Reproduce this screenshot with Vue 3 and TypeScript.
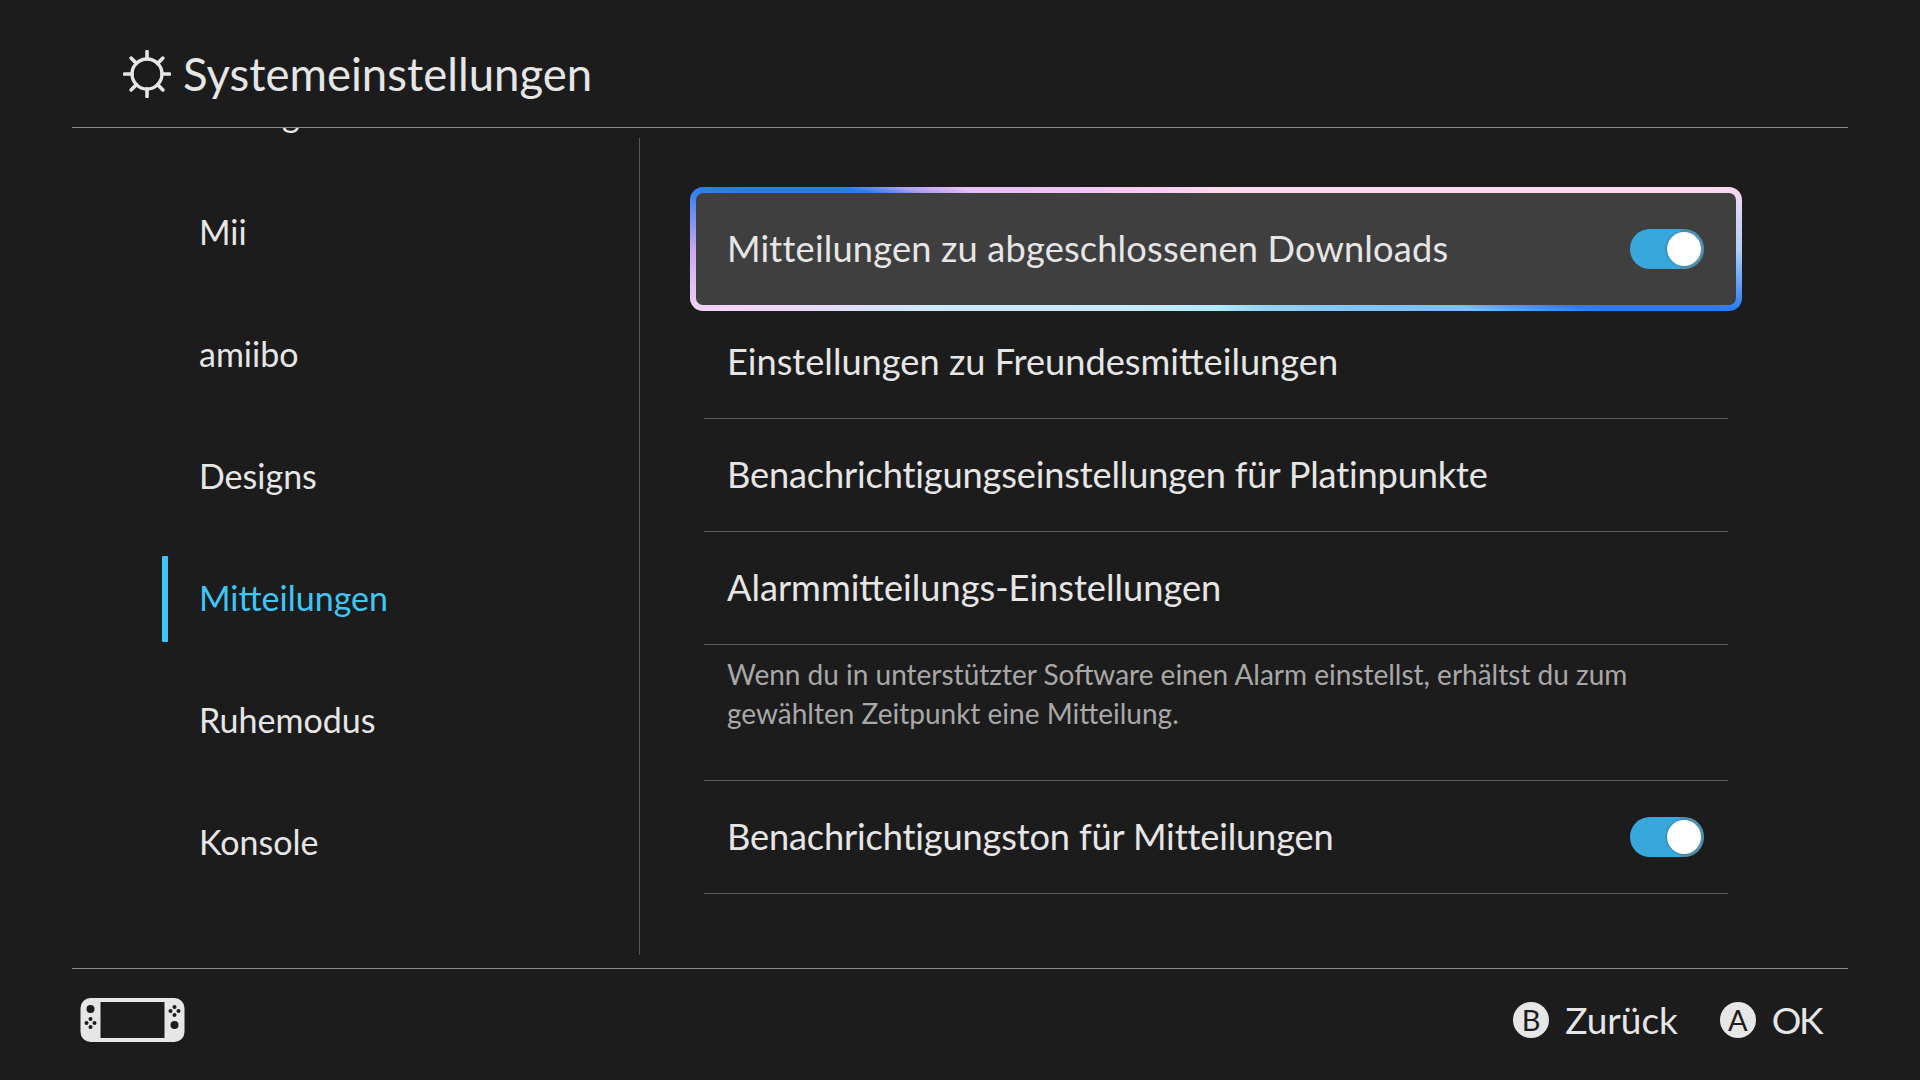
<script setup lang="ts">
interface SideItem { label: string; active?: boolean }
const sideItems: SideItem[] = [
  { label: 'Anzeige' },
  { label: 'Mii' },
  { label: 'amiibo' },
  { label: 'Designs' },
  { label: 'Mitteilungen', active: true },
  { label: 'Ruhemodus' },
  { label: 'Konsole' },
]
const spokes = [0, 45, 90, 135, 180, 225, 270, 315]
</script>

<template>
  <div class="page">
    <header class="header">
      <svg class="gear" viewBox="0 0 48 48" aria-hidden="true">
        <circle cx="24" cy="24" r="15" fill="none" stroke="#e6e6e6" stroke-width="3.4" />
        <line
          v-for="a in spokes"
          :key="a"
          x1="24" y1="9" x2="24" y2="1.5"
          stroke="#e6e6e6" stroke-width="3.6" stroke-linecap="round"
          :transform="`rotate(${a} 24 24)`"
        />
      </svg>
      <h1 class="title">Systemeinstellungen</h1>
    </header>

    <main class="main">
      <nav class="side">
        <div v-for="item in sideItems" :key="item.label" class="side-item" :class="{ active: item.active }">
          <span class="side-mark"></span>
          <span class="side-label">{{ item.label }}</span>
        </div>
      </nav>
      <div class="divider"></div>
      <section class="content">
        <div class="card">
          <span class="label wide">Mitteilungen zu abgeschlossenen Downloads</span>
          <span class="toggle"><span class="knob"></span></span>
        </div>
        <div class="row"><span class="label">Einstellungen zu Freundesmitteilungen</span></div>
        <div class="row"><span class="label tight">Benachrichtigungseinstellungen für Platinpunkte</span></div>
        <div class="row"><span class="label">Alarmmitteilungs-Einstellungen</span></div>
        <p class="desc">Wenn du in unterstützter Software einen Alarm einstellst, erhältst du zum<br />gewählten Zeitpunkt eine Mitteilung.</p>
        <div class="row">
          <span class="label tight">Benachrichtigungston für Mitteilungen</span>
          <span class="toggle"><span class="knob"></span></span>
        </div>
      </section>
    </main>

    <footer class="footer">
      <svg class="console" viewBox="0 0 104 44" aria-hidden="true">
        <path
          fill="#e6e6e6"
          fill-rule="evenodd"
          d="M10 0H94A10 10 0 0 1 104 10V34A10 10 0 0 1 94 44H10A10 10 0 0 1 0 34V10A10 10 0 0 1 10 0ZM20 4V40H84V4Z"
        />
        <g fill="#1c1c1c">
          <circle cx="10" cy="11" r="4" />
          <circle cx="10" cy="21" r="2" /><circle cx="10" cy="29" r="2" />
          <circle cx="6" cy="25" r="2" /><circle cx="14" cy="25" r="2" />
          <circle cx="94" cy="9" r="2" /><circle cx="94" cy="17" r="2" />
          <circle cx="90" cy="13" r="2" /><circle cx="98" cy="13" r="2" />
          <circle cx="94" cy="27" r="4" />
        </g>
      </svg>
      <div class="actions">
        <div class="action"><span class="btn">B</span><span>Zurück</span></div>
        <div class="action"><span class="btn">A</span><span class="ok">OK</span></div>
      </div>
    </footer>
  </div>
</template>

<style>
html, body { margin: 0; background: #1c1c1c; }
</style>

<style scoped>
.page {
  width: 1920px;
  height: 1080px;
  background: #1c1c1c;
  color: #e6e6e6;
  font-family: "Lato", "Noto Sans", sans-serif;
  display: flex;
  flex-direction: column;
  overflow: hidden;
}
.header {
  height: 105px;
  margin: 0 72px;
  padding: 22px 0 0 51px;
  border-bottom: 1px solid #8a8a8a;
  display: flex;
  align-items: center;
  gap: 12px;
  flex: none;
}
.gear { width: 48px; height: 48px; flex: none; margin-top: -1px; }
.title { margin: -1px 0 0; font-size: 45.5px; font-weight: 400; line-height: 1; }
.main { flex: 1; display: flex; min-height: 0; margin: 0 72px; }
.side { width: 567px; flex: none; overflow: hidden; box-sizing: border-box; padding-left: 90px; }
.side-item {
  height: 122px;
  display: flex;
  align-items: center;
  font-size: 34px;
  gap: 31px;
}
.side-item:first-child { margin-top: -78px; }
.side-label { margin-top: -2px; line-height: 1; }
.side-item:first-child .side-label { margin-top: 5px; }
.side-mark { width: 6px; height: 86px; flex: none; border-radius: 1px; }
.active { color: #3fc6f5; }
.active .side-mark { background: #3fc6f5; }
.divider { width: 1px; background: #555; margin: 10px 0 13px; flex: none; }
.content { flex: 1; padding: 59px 0 0 50px; }
.card {
  width: 1052px;
  height: 124px;
  box-sizing: border-box;
  padding: 0 32px 0 31px;
  border: 6px solid transparent;
  border-radius: 13px;
  background:
    linear-gradient(#3f3f3f, #3f3f3f) padding-box,
    conic-gradient(from 0deg,
      #ffd8ee 0deg, #ffd8f0 83deg, #b0d0fa 90deg, #2a7df0 96.7deg, #2a7df0 99deg,
      #7dc0fa 103.3deg, #b0ecfc 180deg, #cfe8fa 258.9deg, #f4d4f6 263deg,
      #c8a8f2 270deg, #2a7df0 276.7deg, #2a7df0 279.3deg, #b0a0f0 281deg,
      #e8bef6 283.3deg, #f8c8f4 301deg, #ffd8ee 360deg) border-box;
  display: flex;
  align-items: center;
  justify-content: space-between;
  font-size: 36.2px;
  margin-bottom: -5px;
}
.row {
  margin: 0 14px;
  width: 1024px;
  height: 113px;
  box-sizing: border-box;
  border-bottom: 1px solid #5c5c5c;
  padding: 0 24px 0 23px;
  display: flex;
  align-items: center;
  justify-content: space-between;
  font-size: 36.2px;
}
.label { margin-top: -3px; }
.wide { letter-spacing: 0.18px; }
.tight { letter-spacing: -0.15px; }
.desc {
  margin: 0 14px;
  width: 1024px;
  height: 136px;
  box-sizing: border-box;
  border-bottom: 1px solid #5c5c5c;
  padding: 10px 23px 0;
  font-size: 28px;
  line-height: 39px;
  color: #a8a8a8;
}
.toggle {
  width: 74px;
  height: 40px;
  border-radius: 20px;
  background: linear-gradient(to right, #38a8dc 68%, #4f92ad 68%);
  display: flex;
  align-items: center;
  justify-content: flex-end;
  padding-right: 3px;
  box-sizing: border-box;
  flex: none;
}
.knob {
  width: 34px;
  height: 34px;
  border-radius: 50%;
  background: #fff;
  box-shadow: -1px 0 2px rgba(0, 0, 0, 0.25);
}
.footer {
  margin: 0 72px;
  flex: none;
  height: 101px;
  padding: 0 27px 10px 8px;
  border-top: 1px solid #8a8a8a;
  display: flex;
  align-items: center;
  justify-content: space-between;
}
.console { width: 105px; height: 44px; flex: none; }
.actions { display: flex; gap: 42px; font-size: 37px; line-height: 1; }
.action { display: flex; align-items: center; gap: 16px; }
.ok { letter-spacing: -2.5px; }
.btn {
  width: 36px;
  height: 36px;
  border-radius: 50%;
  background: #e6e6e6;
  color: #1c1c1c;
  font-size: 29px;
  display: flex;
  align-items: center;
  justify-content: center;
}
</style>
